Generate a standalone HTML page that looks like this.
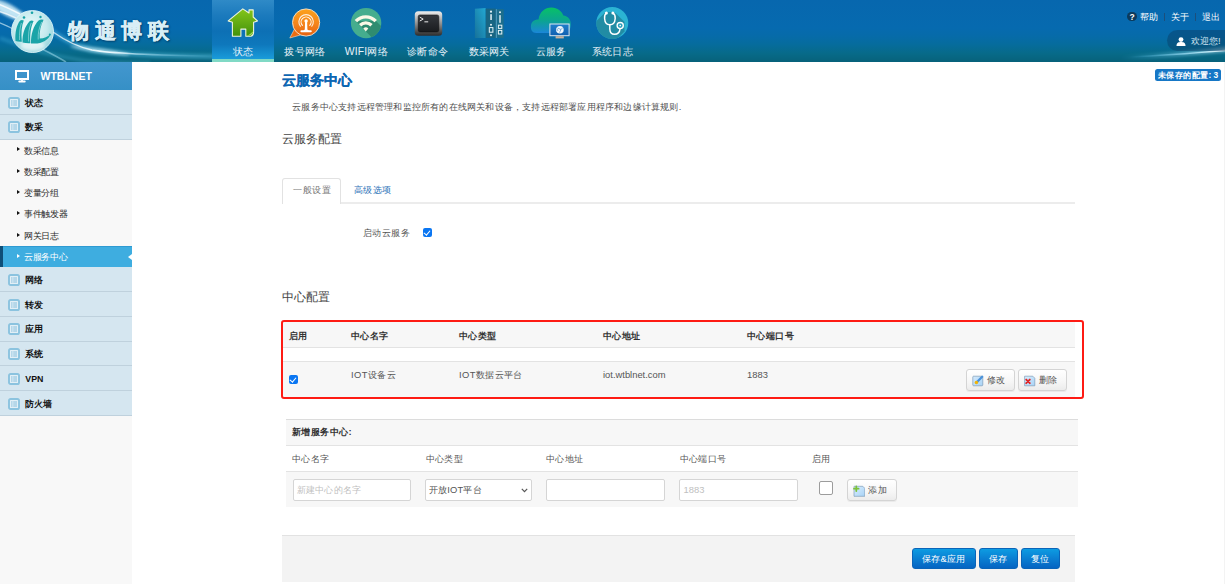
<!DOCTYPE html>
<html><head><meta charset="utf-8">
<style>
*{box-sizing:border-box;margin:0;padding:0}
html,body{width:1225px;height:584px;overflow:hidden;background:#fff;font-family:"Liberation Sans",sans-serif;color:#333}
.abs{position:absolute}
#hdr{position:absolute;left:0;top:0;width:1225px;height:62px;background:linear-gradient(180deg,#0767ae 0%,#066aaf 45%,#066ba9 58%,#066c9c 72%,#076a88 87%,#07617a 100%);overflow:hidden}
.lbl{position:absolute;top:45.5px;width:60px;text-align:center;font-size:10.4px;letter-spacing:.15px;color:#e6f1f8;white-space:nowrap;line-height:12px}
#side{position:absolute;left:0;top:62px;width:132px;height:522px;background:#f8f8f8}
.sh{height:28px;background:linear-gradient(180deg,#4397cf,#3690c6);color:#fff;font-weight:bold;font-size:10.5px;position:relative}
.m{height:24.75px;background:#d5e6f0;border-bottom:1px solid #bfd1dd;position:relative;font-weight:bold;font-size:8.8px;color:#111}
.m .ic{position:absolute;left:8px;top:6.5px}
.m span{position:absolute;left:25.3px;top:6.5px;line-height:12px}
.s{height:21.34px;background:#f8f8f8;position:relative;font-size:8.8px;letter-spacing:-.3px;color:#2a2a2a}
.s:before{content:"";position:absolute;left:16.5px;top:7.7px;border-left:3.6px solid #111;border-top:2.7px solid transparent;border-bottom:2.7px solid transparent}
.s span{position:absolute;left:24px;top:5px;line-height:12px}
.s.act{background:#3eade0;color:#fff;border-top:1px solid #2e9ad2}
.s.act:before{border-left-color:#fff;top:6.7px}
.s.act span{top:4px}
.s.act i{position:absolute;left:0;top:-1px;width:2.5px;height:21.34px;background:#0f4f78}
.s.act b{position:absolute;right:0;top:6.5px;border-right:4px solid #fff;border-top:3.5px solid transparent;border-bottom:3.5px solid transparent}
.b{font-weight:bold;color:#333}
.cbx{width:9px;height:9px;border-radius:2px;background:#0a76f2}
.cbx.on:after{content:"";position:absolute;left:2.2px;top:.6px;width:2.6px;height:5px;border:solid #fff;border-width:0 1.5px 1.5px 0;transform:rotate(40deg)}
.btn{height:21.5px;border:1px solid #d4d4d4;border-radius:3px;background:linear-gradient(180deg,#fff 0%,#f6f6f6 60%,#ececec 100%);box-shadow:0 1px 0 rgba(0,0,0,.05)}
.inp{height:21.5px;border:1px solid #d5d5d5;border-radius:2px;background:#fff}
.bb{height:21px;border-radius:3px;background:linear-gradient(180deg,#0d9ce2 0%,#0a7fd2 50%,#0564c2 100%);color:#fff;font-size:9.4px;line-height:19px;text-align:center;white-space:nowrap;border:1px solid #0a64b8;letter-spacing:.3px}
.t9{font-size:9.4px;line-height:12px;white-space:nowrap;letter-spacing:.4px}
.lat{letter-spacing:0}
</style></head><body>
<div id="hdr">
  <svg class="abs" style="left:0;top:0" width="1225" height="62" viewBox="0 0 1225 62">
    <defs>
      <linearGradient id="sw1" x1="0" y1="0" x2="1" y2="0">
        <stop offset="0" stop-color="#fff" stop-opacity=".9"/>
        <stop offset=".5" stop-color="#9fe3ff" stop-opacity=".6"/>
        <stop offset="1" stop-color="#5fd0ff" stop-opacity="0"/>
      </linearGradient>
      <linearGradient id="sw2" x1="0" y1="0" x2="1" y2="0">
        <stop offset="0" stop-color="#5fd0ff" stop-opacity="0"/>
        <stop offset=".7" stop-color="#bff0ff" stop-opacity=".8"/>
        <stop offset="1" stop-color="#fff" stop-opacity=".9"/>
      </linearGradient>
      <linearGradient id="sw3" x1="50" y1="0" x2="215" y2="0" gradientUnits="userSpaceOnUse"><stop offset="0" stop-color="#fff" stop-opacity=".6"/><stop offset=".35" stop-color="#fff" stop-opacity="1"/><stop offset=".6" stop-color="#c8f0ff" stop-opacity=".45"/><stop offset="1" stop-color="#8fe0ff" stop-opacity="0"/></linearGradient>
      <radialGradient id="ball" cx=".45" cy=".4" r=".6">
        <stop offset="0" stop-color="#eefcfc"/>
        <stop offset=".65" stop-color="#c6eaee"/>
        <stop offset="1" stop-color="#9ad6de"/>
      </radialGradient>
    </defs>
    <filter id="bl1" x="-20%" y="-50%" width="140%" height="200%"><feGaussianBlur stdDeviation="1.6"/></filter>
    <filter id="bl2" x="-20%" y="-50%" width="140%" height="200%"><feGaussianBlur stdDeviation=".6"/></filter>
    <ellipse cx="8" cy="10" rx="18" ry="6" fill="#e6fbff" opacity=".75" filter="url(#bl1)" transform="rotate(30 8 10)"/>
    <path d="M-4 6 C6 9 14 12 24 17" stroke="#d8f6ff" stroke-width="8" fill="none" opacity=".45" filter="url(#bl1)"/>
    <path d="M-2 4 C6 7 12 10 20 14" stroke="#fff" stroke-width="1.6" fill="none" opacity=".8" filter="url(#bl2)"/>
    <path d="M-2 11 C5 13 10 15 16 18" stroke="#fff" stroke-width="1.4" fill="none" opacity=".7" filter="url(#bl2)"/>
    <path d="M-2 22 C3 24 8 26 13 29" stroke="#e8fbff" stroke-width="1.3" fill="none" opacity=".6" filter="url(#bl2)"/>
    <path d="M52 31 C62 38 74 46 92 50 C115 54 170 56 215 56.5" stroke="#6fd8ff" stroke-width="5" fill="none" opacity=".35" filter="url(#bl1)"/>
    <path d="M53 32 C63 39 75 46.5 92 50 C115 54 170 55.5 215 56.2" stroke="url(#sw3)" stroke-width="1.5" fill="none" filter="url(#bl2)"/>
    
    <path d="M0 38 C20 46 45 55 80 60 C100 63 130 63 150 63" stroke="#5ccbf0" stroke-width="4" fill="none" opacity=".25" filter="url(#bl1)"/>
    <ellipse cx="100" cy="50.5" rx="30" ry="2.5" fill="#dff8ff" opacity=".55" filter="url(#bl1)" transform="rotate(8 100 50.5)"/>
    <path d="M40 48 C50 53 58 57 66 62" stroke="#bff0ff" stroke-width="1.5" fill="none" opacity=".45" filter="url(#bl2)"/>
    <path d="M1120 58 C1160 56 1195 53 1230 49" stroke="url(#sw2)" stroke-width="5" fill="none" opacity=".5" filter="url(#bl1)"/>
    <path d="M1130 57 C1165 55.5 1195 53 1230 50" stroke="url(#sw2)" stroke-width="1.6" fill="none" filter="url(#bl2)"/>
    <g>
      <circle cx="32.5" cy="31.5" r="21" fill="url(#ball)" stroke="#eafcff" stroke-width=".8"/>
      <ellipse cx="33" cy="46" rx="12" ry="5" fill="#fff" opacity=".55" filter="url(#bl1)"/>
      <path d="M15.5 41 C14.8 33 16.5 25 20.2 20.6 Q21.8 19.6 23.8 20.6 C21.6 26 21 33 21.8 41.8 Q18 42 15.5 41 Z M22.6 42.6 C22.2 34 25 26 29.6 21.2 Q31.4 20 33.6 21 C30.8 27 29.8 34 30.4 43.2 Q26 43.4 22.6 42.6 Z M31 43.4 C30.8 34 33.5 25.5 38.6 20.4 Q40.6 19.2 43.6 19.8 C40.6 25.5 39.2 32 39.8 38.6 C44 38.4 48 36.6 51 34 C48 40.5 41.5 44.4 31 43.4 Z" fill="#1aa4a8"/>
      <path d="M21.4 23 C19.8 28 19.2 34 19.6 40 M31.2 23 C29 28 28.2 34 28.6 41.5 M41.8 22 C39.2 27.5 37.8 33 38.2 39.5" stroke="#c2e8ec" stroke-width=".9" fill="none" opacity=".6"/>
      <circle cx="24" cy="17.5" r="1.3" fill="#18a3a8"/><circle cx="32" cy="12.8" r="1.3" fill="#18a3a8"/><circle cx="40.5" cy="17" r="1.2" fill="#18a3a8"/><circle cx="49.8" cy="34.5" r="1" fill="#18a3a8"/>
    </g>
  </svg>
  <div class="abs" style="left:68px;top:18px;font-size:21.4px;font-weight:bold;color:#d8eef6;-webkit-text-stroke:.5px #d8eef6;letter-spacing:5.5px;line-height:26px;text-shadow:1px 1px 2px rgba(0,25,60,.7),0 0 2px rgba(0,25,60,.5)">物通博联</div>

  <div class="abs" style="left:212px;top:0;width:62px;height:62px;background:linear-gradient(180deg,#2f8ac7 0%,#1b7abd 25%,#0d70b5 50%,#0e78bc 72%,#1a9bda 95%)"></div>
  <div class="abs" style="left:212px;top:59px;width:62px;height:3px;background:#80d9c5"></div>
  <div class="lbl" style="left:213px">状态</div>
  <div class="lbl" style="left:274.7px">拨号网络</div>
  <div class="lbl" style="left:336.25px">WIFI网络</div>
  <div class="lbl" style="left:397.6px">诊断命令</div>
  <div class="lbl" style="left:459.25px">数采网关</div>
  <div class="lbl" style="left:520.75px">云服务</div>
  <div class="lbl" style="left:582.5px">系统日志</div>
  <svg class="abs" style="left:0;top:0" width="1225" height="62" viewBox="0 0 1225 62">
    <defs>
      <linearGradient id="hg" x1="0" y1="0" x2="0" y2="1"><stop offset="0" stop-color="#84c51a"/><stop offset="1" stop-color="#43920c"/></linearGradient>
      <linearGradient id="og" x1="0" y1="0" x2="0" y2="1"><stop offset="0" stop-color="#fca21c"/><stop offset=".55" stop-color="#f5841c"/><stop offset="1" stop-color="#e5600f"/></linearGradient>
      <clipPath id="wc"><circle cx="366.1" cy="23.1" r="15.2"/></clipPath>
      <linearGradient id="tg" x1="0" y1="0" x2="0" y2="1"><stop offset="0" stop-color="#f0f0f0"/><stop offset=".45" stop-color="#9a9a9a"/><stop offset="1" stop-color="#2c2c2c"/></linearGradient>
      <linearGradient id="tg2" x1="0" y1="0" x2="0" y2="1"><stop offset="0" stop-color="#34373c"/><stop offset="1" stop-color="#1a1c1f"/></linearGradient>
      <linearGradient id="gg" x1="1" y1="0" x2="0" y2="1"><stop offset="0" stop-color="#23a8d2"/><stop offset="1" stop-color="#17729a"/></linearGradient>
      <linearGradient id="cg" x1="0" y1="0" x2="0" y2="1"><stop offset="0" stop-color="#08c166"/><stop offset=".5" stop-color="#0ba58f"/><stop offset="1" stop-color="#1b86d8"/></linearGradient>
      <linearGradient id="mg" x1="0" y1="0" x2="0" y2="1"><stop offset="0" stop-color="#1e7fcc"/><stop offset="1" stop-color="#1160b0"/></linearGradient>
      <clipPath id="stc"><circle cx="612.25" cy="23" r="16"/></clipPath>
    </defs>
    <!-- house -->
    <path d="M242.8 8.9 L228.2 20.9 L232.4 22.2 L232.4 36.2 L240.9 36.2 L240.9 29.1 L245.8 29.1 L245.8 36.2 L251 36.2 Q253.6 35.5 253.6 32 L253.6 22.2 L257.5 21 L253.2 17 L253.2 9.9 L249 9.9 L249 13 Z" fill="url(#hg)" stroke="#eef5dc" stroke-width="1.1" stroke-linejoin="round"/>
    <path d="M247 36 Q252.5 35.8 253.4 31 Q251 33.5 247 36 Z" fill="#a6d85a"/>
    <!-- orange bubble -->
    <path d="M289.8 38 L294.5 29 L300.5 35 Z" fill="#ec6c12" stroke="#f7dcc0" stroke-width=".6" stroke-linejoin="round"/>
    <circle cx="306.1" cy="22.5" r="13.6" fill="url(#og)" stroke="#fce6cc" stroke-width=".9"/>
    <path d="M302.4 25.4 A5 5 0 1 1 309.8 25.4" stroke="#fff" stroke-width="1.1" fill="none" stroke-linecap="round" opacity=".95"/>
    <path d="M300.4 26.2 A7.2 7.2 0 1 1 311.8 26.2" stroke="#fff" stroke-width="1.1" fill="none" stroke-linecap="round" opacity=".85"/>
    <circle cx="306.1" cy="20.9" r="1.7" fill="#fff"/>
    <path d="M305.1 21.5 L307.1 21.5 L307.4 29.5 Q307.8 30.2 309 30.3 L310.8 30.3 Q311.8 30.5 311.8 31.3 Q311.8 32.2 310.8 32.2 L301.4 32.2 Q300.4 32.2 300.4 31.3 Q300.4 30.4 301.4 30.3 L303.2 30.3 Q304.4 30.2 304.8 29.5 Z" fill="#fff"/>
    <!-- wifi -->
    <circle cx="366.1" cy="23.1" r="15.2" fill="#45ad8e"/>
    <path d="M355.6 21 L376 21 L400 45 L390 56 Z" fill="#2f8c70" clip-path="url(#wc)"/>
    <path d="M355.9 21.2 A13.4 13.4 0 0 1 375.7 21.2" stroke="#fbf8e6" stroke-width="3.3" fill="none"/>
    <path d="M360.1 25.2 A8.2 8.2 0 0 1 371.5 25.2" stroke="#fbf8e6" stroke-width="3.3" fill="none"/>
    <path d="M365.8 31.4 L363.3 28.6 A3.5 3.5 0 0 1 368.3 28.6 Z" fill="#fbf8e6"/>
    <!-- terminal -->
    <rect x="414.8" y="11.2" width="27.4" height="24.6" rx="3.5" fill="url(#tg)"/>
    <rect x="418.2" y="14.9" width="20.6" height="17" rx="1.8" fill="url(#tg2)" stroke="#0e0e0e" stroke-width=".5"/>
    <path d="M419.8 17.2 L423.2 19.1 L419.8 21" stroke="#e8e8e8" stroke-width="1" fill="none"/>
    <rect x="424.4" y="21.2" width="3.8" height="1.2" fill="#ccc"/>
    <!-- gateway -->
    <path d="M474.9 8.8 L485.7 8 L485.7 37.9 L474.9 37.9 Z" fill="url(#gg)"/>
    <rect x="485.7" y="8.6" width="10.1" height="29.3" fill="#196683"/>
    <rect x="495.9" y="9.2" width=".8" height="28.7" fill="#86c4d8"/>
    <rect x="496.7" y="9.2" width="7" height="28.7" fill="#1c6e8c"/>
    <g fill="#e6f3f7">
      <circle cx="491" cy="11.7" r="1.1"/><rect x="490.3" y="14.2" width="1.5" height="5.8"/><circle cx="491" cy="24.7" r="1"/><circle cx="491" cy="35.2" r="1"/>
      <circle cx="500" cy="12.3" r="1"/><rect x="499.3" y="15.1" width="1.4" height="7.7"/>
    </g>
    <g fill="none" stroke="#e6f3f7" stroke-width="1">
      <rect x="489.3" y="27.6" width="3.6" height="4.6"/><rect x="498.4" y="25.2" width="3.4" height="3.2"/><rect x="498.4" y="30.4" width="3.4" height="3.6"/>
    </g>
    <!-- cloud -->
    <path d="M536.5 33 C532 33 530.9 30 530.9 26.5 C530.9 22 534 19.5 538.5 19.5 C539.5 12 545 7.6 551.4 7.6 C557.5 7.6 562 11.5 563.3 15.5 C568 16 570.9 19.5 570.9 24.5 C570.9 29.5 568 33 563.5 33 Z" fill="url(#cg)"/>
    <rect x="549.9" y="24" width="19.2" height="11.7" fill="url(#mg)" stroke="#dde6ee" stroke-width="1"/>
    <circle cx="559.9" cy="29.8" r="3.8" fill="#eef6fc"/>
    <path d="M557.5 28 L561 29.5 L559.5 32.5 M561 29.5 L562.8 27.5 M558 31 L557 29" stroke="#2a78c0" stroke-width=".55" fill="none"/>
    <rect x="555.6" y="36.2" width="8.2" height="2.2" fill="#c9b29c"/>
    <!-- stethoscope -->
    <circle cx="612.25" cy="23" r="16" fill="#2bb3d3"/>
    <path d="M605.5 12 L594 23.5 L594 42 L614 42 L624.5 31.5 L624.5 22 L616.5 14 L614 12 Z" fill="#1f8299" opacity=".8" clip-path="url(#stc)"/>
    <path d="M606.4 13.1 Q604.3 14.5 604.6 18.5 Q605 24.8 609.8 24.8 Q614.8 24.8 615.2 18.5 Q615.5 14.5 612.9 13.1" stroke="#fff" stroke-width="1.45" fill="none"/>
    <circle cx="606.4" cy="13.1" r="1.5" fill="#fff"/><circle cx="612.9" cy="13.1" r="1.5" fill="#fff"/>
    <path d="M609.8 24.8 L609.8 29 Q610 34.3 614.5 34.3 Q619.5 34.3 620 28.9" stroke="#fff" stroke-width="1.45" fill="none"/>
    <circle cx="620.2" cy="25.6" r="3.1" fill="#2aa0bd" stroke="#fff" stroke-width="1.3"/>
    <circle cx="620.2" cy="25.6" r=".8" fill="#fff"/>
  </svg>
  <div class="abs" style="left:1127.3px;top:11.6px;width:9.6px;height:9.6px;border-radius:50%;background:#0c3a5c;color:#fff;font-size:8.5px;font-weight:bold;text-align:center;line-height:10px">?</div>
  <div class="abs" style="left:1139.5px;top:11px;font-size:9.4px;color:#fff;line-height:12px;white-space:nowrap">帮助</div>
  <div class="abs" style="left:1164px;top:13px;width:1px;height:8px;background:#1b4f7c"></div>
  <div class="abs" style="left:1171px;top:11px;font-size:9.4px;color:#fff;line-height:12px;white-space:nowrap">关于</div>
  <div class="abs" style="left:1195px;top:13px;width:1px;height:8px;background:#1b4f7c"></div>
  <div class="abs" style="left:1202px;top:11px;font-size:9.4px;color:#fff;line-height:12px;white-space:nowrap">退出</div>
  <div class="abs" style="left:1167px;top:30px;width:70px;height:21px;border-radius:11px;background:rgba(8,60,100,.45)"></div>
  <svg class="abs" style="left:1176px;top:37px" width="10" height="9" viewBox="0 0 10 9"><circle cx="5" cy="2.6" r="2.4" fill="#fff"/><path d="M0.5 9 C0.5 5.5 2.5 5 5 5 C7.5 5 9.5 5.5 9.5 9 Z" fill="#fff"/></svg>
  <div class="abs" style="left:1191px;top:35px;font-size:9.4px;color:#cfe3f0;line-height:12px;white-space:nowrap">欢迎您!</div>
</div>

<div id="side">
  <div class="sh"><svg class="abs" style="left:15px;top:7.5px" width="14" height="13" viewBox="0 0 14 13"><rect x="1" y="1" width="12" height="8" fill="none" stroke="#fff" stroke-width="2"/><rect x="6" y="9.5" width="2" height="1.5" fill="#e8f2fa"/><rect x="3.3" y="10.6" width="7.4" height="2" rx="1" fill="#fff"/></svg><span class="abs" style="left:40.5px;top:8px;line-height:12px;letter-spacing:0">WTBLNET</span></div>
  <div class="m"><svg class="ic" width="12" height="12" viewBox="0 0 12 12"><rect x="1" y="1" width="10" height="10" rx="1.6" fill="#e2eff6" stroke="#8bc3df" stroke-width="1.9"/><g fill="#a3cde4"><rect x="3" y="3.3" width="1.6" height="1.4"/><rect x="5.2" y="3.3" width="3.8" height="1.4"/><rect x="3" y="5.3" width="1.6" height="1.4"/><rect x="5.2" y="5.3" width="3.8" height="1.4"/><rect x="3" y="7.3" width="1.6" height="1.4"/><rect x="5.2" y="7.3" width="3.8" height="1.4"/></g></svg><span>状态</span></div>
  <div class="m"><svg class="ic" width="12" height="12" viewBox="0 0 12 12"><rect x="1" y="1" width="10" height="10" rx="1.6" fill="#e2eff6" stroke="#8bc3df" stroke-width="1.9"/><g fill="#a3cde4"><rect x="3" y="3.3" width="1.6" height="1.4"/><rect x="5.2" y="3.3" width="3.8" height="1.4"/><rect x="3" y="5.3" width="1.6" height="1.4"/><rect x="5.2" y="5.3" width="3.8" height="1.4"/><rect x="3" y="7.3" width="1.6" height="1.4"/><rect x="5.2" y="7.3" width="3.8" height="1.4"/></g></svg><span>数采</span></div>
  <div class="s"><span>数采信息</span></div>
  <div class="s"><span>数采配置</span></div>
  <div class="s"><span>变量分组</span></div>
  <div class="s"><span>事件触发器</span></div>
  <div class="s"><span>网关日志</span></div>
  <div class="s act"><i></i><b></b><span>云服务中心</span></div>
  <div class="m"><svg class="ic" width="12" height="12" viewBox="0 0 12 12"><rect x="1" y="1" width="10" height="10" rx="1.6" fill="#e2eff6" stroke="#8bc3df" stroke-width="1.9"/><g fill="#a3cde4"><rect x="3" y="3.3" width="1.6" height="1.4"/><rect x="5.2" y="3.3" width="3.8" height="1.4"/><rect x="3" y="5.3" width="1.6" height="1.4"/><rect x="5.2" y="5.3" width="3.8" height="1.4"/><rect x="3" y="7.3" width="1.6" height="1.4"/><rect x="5.2" y="7.3" width="3.8" height="1.4"/></g></svg><span>网络</span></div>
  <div class="m"><svg class="ic" width="12" height="12" viewBox="0 0 12 12"><rect x="1" y="1" width="10" height="10" rx="1.6" fill="#e2eff6" stroke="#8bc3df" stroke-width="1.9"/><g fill="#a3cde4"><rect x="3" y="3.3" width="1.6" height="1.4"/><rect x="5.2" y="3.3" width="3.8" height="1.4"/><rect x="3" y="5.3" width="1.6" height="1.4"/><rect x="5.2" y="5.3" width="3.8" height="1.4"/><rect x="3" y="7.3" width="1.6" height="1.4"/><rect x="5.2" y="7.3" width="3.8" height="1.4"/></g></svg><span>转发</span></div>
  <div class="m"><svg class="ic" width="12" height="12" viewBox="0 0 12 12"><rect x="1" y="1" width="10" height="10" rx="1.6" fill="#e2eff6" stroke="#8bc3df" stroke-width="1.9"/><g fill="#a3cde4"><rect x="3" y="3.3" width="1.6" height="1.4"/><rect x="5.2" y="3.3" width="3.8" height="1.4"/><rect x="3" y="5.3" width="1.6" height="1.4"/><rect x="5.2" y="5.3" width="3.8" height="1.4"/><rect x="3" y="7.3" width="1.6" height="1.4"/><rect x="5.2" y="7.3" width="3.8" height="1.4"/></g></svg><span>应用</span></div>
  <div class="m"><svg class="ic" width="12" height="12" viewBox="0 0 12 12"><rect x="1" y="1" width="10" height="10" rx="1.6" fill="#e2eff6" stroke="#8bc3df" stroke-width="1.9"/><g fill="#a3cde4"><rect x="3" y="3.3" width="1.6" height="1.4"/><rect x="5.2" y="3.3" width="3.8" height="1.4"/><rect x="3" y="5.3" width="1.6" height="1.4"/><rect x="5.2" y="5.3" width="3.8" height="1.4"/><rect x="3" y="7.3" width="1.6" height="1.4"/><rect x="5.2" y="7.3" width="3.8" height="1.4"/></g></svg><span>系统</span></div>
  <div class="m"><svg class="ic" width="12" height="12" viewBox="0 0 12 12"><rect x="1" y="1" width="10" height="10" rx="1.6" fill="#e2eff6" stroke="#8bc3df" stroke-width="1.9"/><g fill="#a3cde4"><rect x="3" y="3.3" width="1.6" height="1.4"/><rect x="5.2" y="3.3" width="3.8" height="1.4"/><rect x="3" y="5.3" width="1.6" height="1.4"/><rect x="5.2" y="5.3" width="3.8" height="1.4"/><rect x="3" y="7.3" width="1.6" height="1.4"/><rect x="5.2" y="7.3" width="3.8" height="1.4"/></g></svg><span>VPN</span></div>
  <div class="m"><svg class="ic" width="12" height="12" viewBox="0 0 12 12"><rect x="1" y="1" width="10" height="10" rx="1.6" fill="#e2eff6" stroke="#8bc3df" stroke-width="1.9"/><g fill="#a3cde4"><rect x="3" y="3.3" width="1.6" height="1.4"/><rect x="5.2" y="3.3" width="3.8" height="1.4"/><rect x="3" y="5.3" width="1.6" height="1.4"/><rect x="5.2" y="5.3" width="3.8" height="1.4"/><rect x="3" y="7.3" width="1.6" height="1.4"/><rect x="5.2" y="7.3" width="3.8" height="1.4"/></g></svg><span>防火墙</span></div>
</div>

<div id="main">
  <div class="abs" style="left:282px;top:71px;font-size:14px;font-weight:bold;color:#0d66b2;line-height:18px;-webkit-text-stroke:.25px #0d66b2">云服务中心</div>
  <div class="abs t9" style="left:292.3px;top:100.5px;color:#505050;letter-spacing:.2px">云服务中心支持远程管理和监控所有的在线网关和设备，支持远程部署应用程序和边缘计算规则.</div>
  <div class="abs" style="left:282px;top:131px;font-size:11.6px;color:#444;line-height:16px">云服务配置</div>

  <div class="abs" style="left:1155px;top:69px;width:66px;height:12px;background:#1677c6;border-radius:2.5px"></div><div class="abs" style="left:1157.5px;top:69.5px;color:#fff;font-weight:bold;font-size:8.4px;line-height:11px;white-space:nowrap;letter-spacing:.5px">未保存的配置<span style="letter-spacing:0">: 3</span></div>
  <div class="abs" style="left:1224px;top:62px;width:1px;height:522px;background:#f3f3f3"></div>

  <!-- tabs -->
  <div class="abs" style="left:282px;top:202px;width:793px;height:2px;background:#ececec"></div>
  <div class="abs" style="left:282px;top:178px;width:59px;height:26px;border:1px solid #e2e2e2;border-bottom:none;border-radius:3px 3px 0 0;background:#fff"></div>
  <div class="abs t9" style="left:293px;top:184px;color:#777;letter-spacing:.55px">一般设置</div>
  <div class="abs t9" style="left:354px;top:184px;color:#2b72b8">高级选项</div>

  <div class="abs t9" style="left:363px;top:227px;color:#555">启动云服务</div>
  <div class="abs cbx on" style="left:423px;top:228px"></div>

  <div class="abs" style="left:282px;top:289px;font-size:11.6px;color:#444;line-height:16px">中心配置</div>

  <!-- table 1 -->
  <div class="abs" style="left:283px;top:322px;width:792px;height:26px;background:#f7f7f7;border-bottom:1px solid #e3e3e3"></div>
  <div class="abs" style="left:283px;top:361px;width:792px;height:36px;background:#f7f7f7;border-top:1px solid #e3e3e3"></div>
  <div class="abs t9 b" style="left:289px;top:330px">启用</div>
  <div class="abs t9 b" style="left:351px;top:330px">中心名字</div>
  <div class="abs t9 b" style="left:459px;top:330px">中心类型</div>
  <div class="abs t9 b" style="left:603px;top:330px">中心地址</div>
  <div class="abs t9 b" style="left:747px;top:330px">中心端口号</div>
  <div class="abs cbx on" style="left:289px;top:375px"></div>
  <div class="abs t9" style="left:351px;top:369px;color:#555">IOT设备云</div>
  <div class="abs t9" style="left:459px;top:369px;color:#555">IOT数据云平台</div>
  <div class="abs t9 lat" style="left:603px;top:369px;color:#555">iot.wtblnet.com</div>
  <div class="abs t9 lat" style="left:747px;top:369px;color:#555">1883</div>
  <div class="abs btn" style="left:966px;top:369px;width:49px">
    <svg class="abs" style="left:5px;top:5px" width="12" height="12" viewBox="0 0 12 12"><defs><linearGradient id="eg" x1="0" y1="0" x2="1" y2="1"><stop offset="0" stop-color="#d4eafc"/><stop offset="1" stop-color="#a9d3f6"/></linearGradient></defs><rect x=".8" y="1.2" width="10" height="9.6" rx=".8" fill="url(#eg)" stroke="#7e9cb8" stroke-width=".7"/><path d="M10.2 1.8 L5 7" stroke="#4b92da" stroke-width="2.3" stroke-linecap="round"/><circle cx="4.4" cy="7.6" r="1.75" fill="#f0b30a"/></svg>
    <span class="abs t9" style="left:19.8px;top:4px;color:#555">修改</span></div>
  <div class="abs btn" style="left:1018px;top:369px;width:49px">
    <svg class="abs" style="left:5px;top:5px" width="12" height="12" viewBox="0 0 12 12"><defs><linearGradient id="dg" x1="0" y1="0" x2="1" y2="1"><stop offset="0" stop-color="#dcefff"/><stop offset="1" stop-color="#a6d2f6"/></linearGradient></defs><path d="M.6 1.2 L8.8 1.2 L10.8 3.2 L10.8 10.8 L.6 10.8 Z" fill="url(#dg)" stroke="#7e9cb8" stroke-width=".7"/><path d="M2.2 4.6 L5.8 8.2 M5.8 4.6 L2.2 8.2" stroke="#e02424" stroke-width="1.9" stroke-linecap="round"/></svg>
    <span class="abs t9" style="left:19.5px;top:4px;color:#555">删除</span></div>
  <div class="abs" style="left:281px;top:320px;width:803px;height:79.5px;border:2px solid #fe1b14;border-radius:3px;top:319.5px"></div>

  <!-- table 2 -->
  <div class="abs" style="left:286px;top:419px;width:792px;height:27px;background:#f7f7f7;border-top:1px solid #dcdcdc;border-bottom:1px solid #e3e3e3"></div>
  <div class="abs" style="left:286px;top:471px;width:792px;height:36px;background:#f7f7f7;border-top:1px solid #e3e3e3"></div>
  <div class="abs t9 b" style="left:292px;top:426px">新增服务中心:</div>
  <div class="abs t9" style="left:292px;top:453px;color:#555">中心名字</div>
  <div class="abs t9" style="left:425.5px;top:453px;color:#555">中心类型</div>
  <div class="abs t9" style="left:546px;top:453px;color:#555">中心地址</div>
  <div class="abs t9" style="left:679.5px;top:453px;color:#555">中心端口号</div>
  <div class="abs t9" style="left:812px;top:453px;color:#555">启用</div>
  <div class="abs inp" style="left:293px;top:479px;width:118px"><span class="abs t9" style="left:3px;top:3.8px;color:#c0c0c0;letter-spacing:.15px">新建中心的名字</span></div>
  <div class="abs inp" style="left:425px;top:479px;width:107px"><span class="abs t9" style="left:2.8px;top:3.5px;color:#555;letter-spacing:.2px">开放IOT平台</span>
    <svg class="abs" style="left:95px;top:8px" width="7" height="5" viewBox="0 0 7 5"><path d="M.8 .8 L3.5 3.6 L6.2 .8" stroke="#555" stroke-width="1.2" fill="none"/></svg></div>
  <div class="abs inp" style="left:545.5px;top:479px;width:119.5px"></div>
  <div class="abs inp" style="left:679px;top:479px;width:118.5px"><span class="abs t9 lat" style="left:3.5px;top:3.8px;color:#c0c0c0">1883</span></div>
  <div class="abs" style="left:819px;top:481px;width:14px;height:14px;border:1.3px solid #9c9c9c;border-radius:2px;background:#fff"></div>
  <div class="abs btn" style="left:847px;top:479px;width:49.5px;height:21.5px">
    <svg class="abs" style="left:5px;top:4.5px" width="12" height="12" viewBox="0 0 12 12"><defs><linearGradient id="ag" x1="0" y1="0" x2="1" y2="1"><stop offset="0" stop-color="#dcefff"/><stop offset="1" stop-color="#a6d2f6"/></linearGradient></defs><path d="M1 1.3 L9.8 1.3 L11.8 3.3 L11.8 11.3 L1 11.3 Z" fill="url(#ag)" stroke="#7e9cb8" stroke-width=".7"/><path d="M3.3 1.4 L3.3 6 M1 3.7 L5.6 3.7" stroke="#7cc23a" stroke-width="1.8" stroke-linecap="round"/></svg>
    <span class="abs t9" style="left:20.2px;top:3.5px;color:#555">添加</span></div>

  <!-- bottom bar -->
  <div class="abs" style="left:282px;top:535px;width:793px;height:47px;background:#f3f3f3;border-top:1px solid #e2e2e2"></div>
  <div class="abs bb" style="left:911.5px;top:548px;width:64.5px">保存&amp;应用</div>
  <div class="abs bb" style="left:978.5px;top:548px;width:39.5px">保存</div>
  <div class="abs bb" style="left:1020.5px;top:548px;width:39.5px">复位</div>
</div>
</body></html>
